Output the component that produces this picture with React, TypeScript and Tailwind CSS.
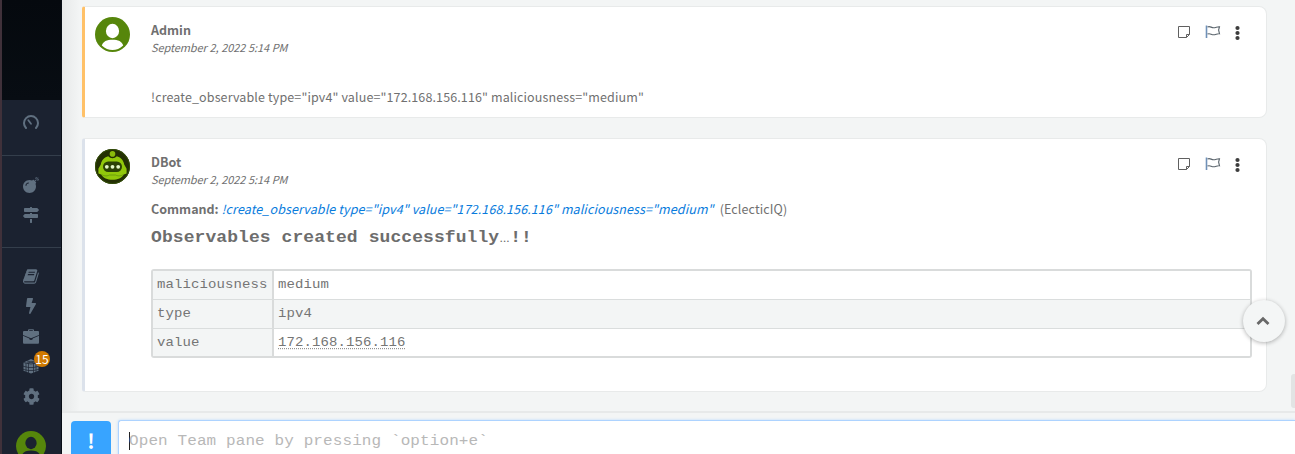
import type { ReactNode } from 'react';
import { FaBolt, FaBomb, FaCog, FaMapSigns } from 'react-icons/fa';

const sans = "font-['Noto_Sans_CJK_SC',sans-serif]";
const mono = "font-['Liberation_Mono',monospace]";

function UserAvatar({ className }: { className: string }) {
  return (
    <svg viewBox="0 0 35 35" className={className}>
      <circle cx="17.5" cy="17.5" r="17.5" fill="#56860b" />
      <ellipse cx="17.5" cy="14" rx="6.6" ry="7.2" className="fill-[var(--cut)]" />
      <path d="M6.8 28.6C7.8 24.5 12 22.8 17.5 22.8S27.2 24.5 28.2 28.6C25 31.8 21.3 33 17.5 33S10 31.8 6.8 28.6Z" className="fill-[var(--cut)]" />
    </svg>
  );
}

function BotAvatar() {
  return (
    <svg viewBox="0 0 35 35" className="size-[35px]">
      <circle cx="17.5" cy="17.5" r="17.5" fill="#243004" />
      <circle cx="17.5" cy="17.5" r="17" fill="none" stroke="#35500a" />
      <path d="M5.8 15.5C6.5 11 9.8 8.2 13.2 7.3C15.5 9.8 19.5 9.8 21.8 7.3C25.2 8.2 28.5 11 29.2 15.5L31.6 19.8V24.5L28.8 25.5C27 29 22.5 30.8 17.5 30.8S8 29 6.2 25.5L3.4 24.5V19.8Z" fill="#92c80b" />
      <circle cx="17.5" cy="4.9" r="2.8" fill="#8bbd0b" />
      <path d="M6.5 25.4C9.5 27.6 12.5 27 14.5 26H20.5C22.5 27 25.5 27.6 28.5 25.4" fill="none" stroke="#65940b" strokeWidth=".8" />
      <rect x="8" y="12.6" width="19" height="10.4" rx="5.2" fill="#2c4205" />
      <circle cx="11.8" cy="17.8" r="1.9" fill="#e5f8c8" />
      <circle cx="17.5" cy="17.8" r="1.9" fill="#e5f8c8" />
      <circle cx="23.2" cy="17.8" r="1.9" fill="#e5f8c8" />
    </svg>
  );
}

function Actions() {
  return (
    <div className="mt-[17px] mr-[25px] flex h-4 shrink-0 items-center text-[#606060]">
      <svg width="14" height="14" viewBox="0 0 14 14" fill="none" stroke="currentColor" strokeWidth="1">
        <path d="M1.5 1.5H12.5V9.5L9.5 12.5H1.5ZM12.5 9.5H9.5V12.5" />
      </svg>
      <svg width="16" height="14" viewBox="0 0 16 14" fill="none" className="ml-[14px]">
        <path d="M1.5 .5V13" stroke="#6f91b8" strokeWidth="1.6" />
        <path d="M2.5 2C5 .8 6.2 2.7 8.5 2.7C11 2.7 12 1.5 14.5 1.7L13.6 5L14.5 8.8C12 8.4 11 9.8 8.5 9.8C6.2 9.8 5 7.9 2.5 9.1" stroke="#59636b" strokeWidth="1.1" />
      </svg>
      <svg width="6" height="16" viewBox="0 0 6 16" fill="#3d3d3d" className="mt-px ml-[14px]">
        <circle cx="2.5" cy="3" r="2.1" />
        <circle cx="2.5" cy="8" r="2.1" />
        <circle cx="2.5" cy="13" r="2.1" />
      </svg>
    </div>
  );
}

function Entry({ author, avatar, className, children }: { author: string; avatar: ReactNode; className: string; children: ReactNode }) {
  return (
    <article className={`flex w-[1185px] rounded-lg rounded-l-[3px] border border-l-[3px] border-[#e8eaea] bg-white ${className}`}>
      <div className="mt-[10px] ml-[10px] w-14 shrink-0">{avatar}</div>
      <div className="flex min-w-0 flex-1 flex-col">
        <div className="flex justify-between">
          <header className={`mt-[13px] text-[#707070] ${sans}`}>
            <div className="h-[19px] text-[12.5px] leading-5 font-bold">{author}</div>
            <div className="h-[17px] text-[11px] leading-4 tracking-[-0.12px] [word-spacing:0.5px] whitespace-nowrap italic">September 2, 2022 5:14 PM</div>
          </header>
          <Actions />
        </div>
        {children}
      </div>
    </article>
  );
}

function Gauge() {
  return (
    <svg width="16" height="15" viewBox="0 0 16 15" fill="none" stroke="currentColor" strokeWidth="2" strokeLinecap="round">
      <path d="M3 13A7 7 0 1 1 13 13" />
      <path d="M5.3 5.3L8 8.8" strokeWidth="1.8" />
    </svg>
  );
}

function Book() {
  return (
    <svg width="17" height="17" viewBox="0 0 1792 1792" fill="currentColor">
      <path d="M1639 478q40 57 18 129l-275 906q-19 64-76.5 107.5t-122.5 43.5h-923q-77 0-148.5-53.5t-99.5-131.5q-24-67-2-127 0-4 3-27t4-37q1-8-3-21.5t-3-19.5q2-11 8-21t16.5-23.5 16.5-23.5q23-38 45-91.5t30-91.5q3-10 .5-30t-.5-28q3-11 17-28t17-23q21-36 42-92t25-90q1-9-2.5-32t.5-28q4-13 22-30.5t22-22.5q19-26 42.5-84.5t27.5-96.5q1-8-3-25.5t-2-26.5q2-8 9-18t18-23 17-21q8-12 16.5-30.5t15-35 16-36 19.5-32 26.5-23.5 36-11.5 47.5 5.5l-1 3q38-9 51-9h761q74 0 114 56t18 130l-274 906q-36 119-71.5 153.5t-128.5 34.5h-869q-27 0-38 15-11 16-1 43 24 70 144 70h923q29 0 56-15.5t35-41.5l300-987q7-22 5-57 38 15 59 43zm-1064 2q-4 13 2 22.5t20 9.5h608q13 0 25.5-9.5t16.5-22.5l21-64q4-13-2-22.5t-20-9.5h-608q-13 0-25.5 9.5t-16.5 22.5zm-83 256q-4 13 2 22.5t20 9.5h608q13 0 25.5-9.5t16.5-22.5l21-64q4-13-2-22.5t-20-9.5h-608q-13 0-25.5 9.5t-16.5 22.5z" />
    </svg>
  );
}

function Briefcase() {
  return (
    <svg width="16" height="15" viewBox="0 0 16 15" fill="currentColor">
      <path d="M5 2V1.2Q5 .3 6 .3H10Q11 .3 11 1.2V2H15Q16 2 16 3V6L8 9.2L0 6V3Q0 2 1 2ZM6.2 2H9.8V1.3H6.2Z" fillRule="evenodd" />
      <path d="M0 6.8L6.3 9.4V10.2Q8 11.6 9.7 10.2V9.4L16 6.8V13.5Q16 14.7 15 14.7H1Q0 14.7 0 13.5Z" />
    </svg>
  );
}

function Cube() {
  return (
    <svg width="16" height="16" viewBox="0 0 16 16">
      <path d="M.5 4.5L8 1L15.5 4.5V12.8L8 15.5L.5 12.8Z" fill="currentColor" />
      <path d="M.5 4.5L8 6L15.5 4.5M5.5 5.5V15M10.5 5.5V15M3 5V14M13 5V14M0 8.2L5.5 9.5H10.5L16 8.2M0 11.3L5.5 12.5H10.5L16 11.3M4 2.9L12 5.2M12 2.9L4 5.2" stroke="#1b2230" strokeWidth=".7" fill="none" />
    </svg>
  );
}

function NavItem({ children }: { children: ReactNode }) {
  return <div className="flex h-[30px] w-full items-center justify-center pr-px">{children}</div>;
}

function Sidebar() {
  return (
    <nav className="flex h-full w-[62px] shrink-0 flex-col border-r border-l-2 border-r-[#090e16] border-l-[#40313a] bg-[#1b2230] text-[#607080]">
      <div className="h-[100px] shrink-0 bg-linear-to-b from-[#05090e] to-[#080d13]" />
      <div className="flex h-[56px] shrink-0 flex-col border-b border-[#343e4b] pt-[7px]">
        <NavItem><Gauge /></NavItem>
      </div>
      <div className="flex h-[92px] shrink-0 flex-col border-b border-[#343e4b] pt-[14px]">
        <NavItem><FaBomb size={16} /></NavItem>
        <NavItem><FaMapSigns size={16} /></NavItem>
      </div>
      <div className="flex flex-col pt-[13px]">
        <NavItem><Book /></NavItem>
        <NavItem><FaBolt size={16} /></NavItem>
        <NavItem><Briefcase /></NavItem>
        <NavItem>
          <div className="relative">
            <Cube />
            <span className={`absolute top-[-7px] left-[11px] flex size-4 -translate-y-1/2 translate-y-0 items-center justify-center rounded-full bg-[#cf7900] text-[12px] leading-4 text-white ${sans}`}>15</span>
          </div>
        </NavItem>
        <NavItem><FaCog size={17} /></NavItem>
        <div className="mt-5 flex justify-center pr-px [--cut:#1b2230]">
          <UserAvatar className="size-[30px]" />
        </div>
      </div>
    </nav>
  );
}

const rows = [
  { key: 'maliciousness', value: 'medium' },
  { key: 'type', value: 'ipv4' },
  { key: 'value', value: '172.168.156.116' },
];

function ResultTable() {
  return (
    <div className={`mt-[19px] h-[89px] w-[1101px] overflow-hidden rounded-[3px] border-2 border-[#d9dbdb] text-[14px] tracking-[0.09px] text-[#757575] ${mono}`}>
      {rows.map((row, index) => (
        <div key={row.key} className="flex h-[29px] border-b border-[#dadddd] leading-[27px] last:border-b-0">
          <div className="w-[121px] shrink-0 border-r-2 border-[#d9dbdb] bg-[#f3f5f5] pl-1">
            <span className="inline-block scale-y-[0.88]">{row.key}</span>
          </div>
          <div className={`flex-1 pl-1 ${index === 1 ? 'bg-[#f3f5f5]' : 'bg-white'}`}>
            <span className={`inline-block scale-y-[0.88] ${index === 2 ? 'underline decoration-dotted decoration-1 underline-offset-[3px]' : ''}`}>{row.value}</span>
          </div>
        </div>
      ))}
    </div>
  );
}

export default function App() {
  return (
    <div className="flex h-[454px] w-full overflow-hidden bg-[#f3f5f5]">
      <Sidebar />
      <main className="relative flex min-w-0 flex-1 flex-col bg-[linear-gradient(90deg,#e7e9e9_0,#f3f5f5_18px)]">
        <section className="flex h-[411px] shrink-0 flex-col gap-5 overflow-hidden pt-[6px] pl-5">
          <Entry author="Admin" className="h-[112px] shrink-0 border-l-[#ffc168]" avatar={<div className="[--cut:white]"><UserAvatar className="size-[35px]" /></div>}>
            <p className={`mt-[31px] h-5 text-[12.5px] leading-5 tracking-[0.12px] whitespace-nowrap text-[#707070] ${sans}`}>
              <span>!create_observable type="ipv4" value="172.168.156.116" maliciousness="medium"</span>
            </p>
          </Entry>
          <Entry author="DBot" className="h-[254px] shrink-0 border-l-[#dce2eb]" avatar={<BotAvatar />}>
            <p className={`mt-[11px] h-5 text-[12.5px] leading-5 whitespace-nowrap text-[#707070] ${sans}`}>
              <b>Command:</b>{' '}
              <i className="tracking-[0.11px] text-[#087bdc]">!create_observable type="ipv4" value="172.168.156.116" maliciousness="medium"</i>
              <span className="ml-[6px] tracking-[0.12px]">(EclecticIQ)</span>
            </p>
            <h2 className={`mt-[6px] h-[25px] text-[18px] leading-6 font-bold tracking-[0.08px] text-[#6d6d6d] ${mono}`}>
              <span className="inline-block origin-[50%_60%] scale-y-[0.88]">Observables created successfully<span className="inline-block w-[11px] text-center font-['Open_Sans',sans-serif] text-[13px] font-normal">…</span>!!</span>
            </h2>
            <ResultTable />
          </Entry>
        </section>
        <footer className="flex flex-1 border-t-2 border-[#e7e9e9] bg-[#f3f5f5] pt-[7px] pl-[9px]">
          <div className={`mt-px flex h-10 w-10 shrink-0 items-center justify-center rounded-[4px] bg-[#38a4ff] text-[20px] font-bold text-white ${sans}`}>!</div>
          <div className={`ml-[7px] flex h-12 flex-1 items-center rounded-tl-[3px] border border-r-0 border-[#add3ff] bg-white pb-[7px] pl-[10px] text-[16px] tracking-[0.1px] text-[#b8b8b8] shadow-[0_0_3px_#b9daff] ${mono}`}>
            <span className="h-[18px] w-px bg-[#222]" />
            <span className="-ml-px scale-y-[0.88]">Open Team pane by pressing `option+e`</span>
          </div>
        </footer>
        <button className="absolute top-[300px] right-[10px] flex size-[42px] items-center justify-center rounded-full bg-[#f4f6f6] pr-[2px] shadow-[0_1px_4px_rgba(0,0,0,0.3)]" aria-label="Scroll to top">
          <svg width="14" height="10" viewBox="0 0 14 10" fill="none" stroke="#686868" strokeWidth="2.8"><path d="M1.5 8L7 2.7L12.5 8" /></svg>
        </button>
        <div className="absolute top-[374px] right-0 h-[34px] w-1 rounded-l-[3px] bg-[#e2e4e4]" />
      </main>
    </div>
  );
}
